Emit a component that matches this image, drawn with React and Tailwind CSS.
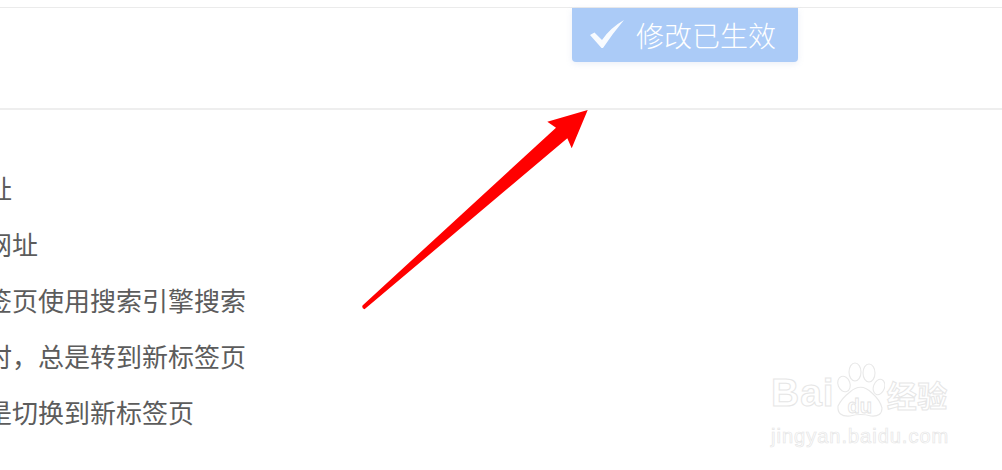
export default function App() {
  const rows = ["默认网址", "打开新网址", "在新标签页使用搜索引擎搜索", "新窗口时，总是转到新标签页", "打开总是切换到新标签页"];
  const font = "font-['Noto_Sans_CJK_SC','Noto_Sans',sans-serif]";
  const latin = "font-['Liberation_Sans',sans-serif]";
  return (
    <div className={`relative w-[1002px] h-[470px] overflow-hidden bg-white ${font}`}>
      <div className="h-[8px] border-b border-[#ebebeb]" />
      <div className="h-[102px] border-b-2 border-[#eeeeee]">
        <div className="ml-[572px] flex h-[54px] w-[226px] items-center rounded-b-[4px] bg-[#abcbf7] pl-[17px] shadow-[0_2px_6px_rgba(120,150,200,0.15)]">
          <svg width="36" height="30" viewBox="0 0 36 30" className="blur-[0.6px]">
            <path d="M1 15 L5.5 12.5 L13 20 Q21 8 35 0 Q24 13 14 28 L12.5 28 Z" fill="#f8fbff" />
          </svg>
          <span className="ml-[11px] text-[28px] leading-none text-white font-light">修改已生效</span>
        </div>
      </div>
      <div className="ml-[-92px] pt-[50px] flex flex-col">
        {rows.map((r) => (
          <div key={r} className="h-[56px] flex items-center whitespace-nowrap text-[26px] leading-none text-[#5c5c5c] font-normal">
            {r}
          </div>
        ))}
      </div>
      <svg className="absolute left-0 top-0" width="1002" height="470" viewBox="0 0 1002 470">
        <path d="M587.7 110 L547.3 121.7 L556 127.7 L362.5 305.5 Q361.5 308.5 364.5 309.3 L567.3 138.3 L571.7 148.3 Z" fill="#ff0000" />
      </svg>
      <div className="absolute left-[771px] top-[362px] flex flex-col text-white">
        <div className="flex h-[56px] items-end">
          <span className={`${latin} text-[39px] leading-[50px] font-bold tracking-[1px] [-webkit-text-stroke:1px_#e6e6e6]`}>Bai</span>
          <div className="relative flex h-[56px] w-[50px] items-end justify-center">
            <svg width="50" height="56" viewBox="0 0 50 56" className="absolute left-0 top-0" fill="none" stroke="#e8e8e8" strokeWidth="1.1">
              <ellipse cx="9" cy="22" rx="6" ry="8" transform="rotate(-20 9 22)" />
              <ellipse cx="20" cy="10" rx="6" ry="9" />
              <ellipse cx="34" cy="11" rx="6" ry="9" />
              <ellipse cx="44" cy="25" rx="5.5" ry="8" transform="rotate(20 44 25)" />
              <path d="M3 44 Q7 36 15 30 Q26 20 37 31 Q45 38 47 46 Q47 55 36 54 Q26 51 15 54 Q2 55 3 44 Z" />
            </svg>
            <span className={`${latin} relative text-[20px] leading-[24px] font-bold [-webkit-text-stroke:0.8px_#e2e2e2]`}>du</span>
          </div>
          <span className="ml-[2px] text-[30px] leading-[48px] font-bold tracking-[0.5px] [-webkit-text-stroke:1px_#e6e6e6]">经验</span>
        </div>
        <span className={`${latin} mt-[6px] text-[20px] leading-[24px] tracking-[1px] [-webkit-text-stroke:0.7px_#e6e6e6]`}>jingyan.baidu.com</span>
      </div>
    </div>
  );
}
